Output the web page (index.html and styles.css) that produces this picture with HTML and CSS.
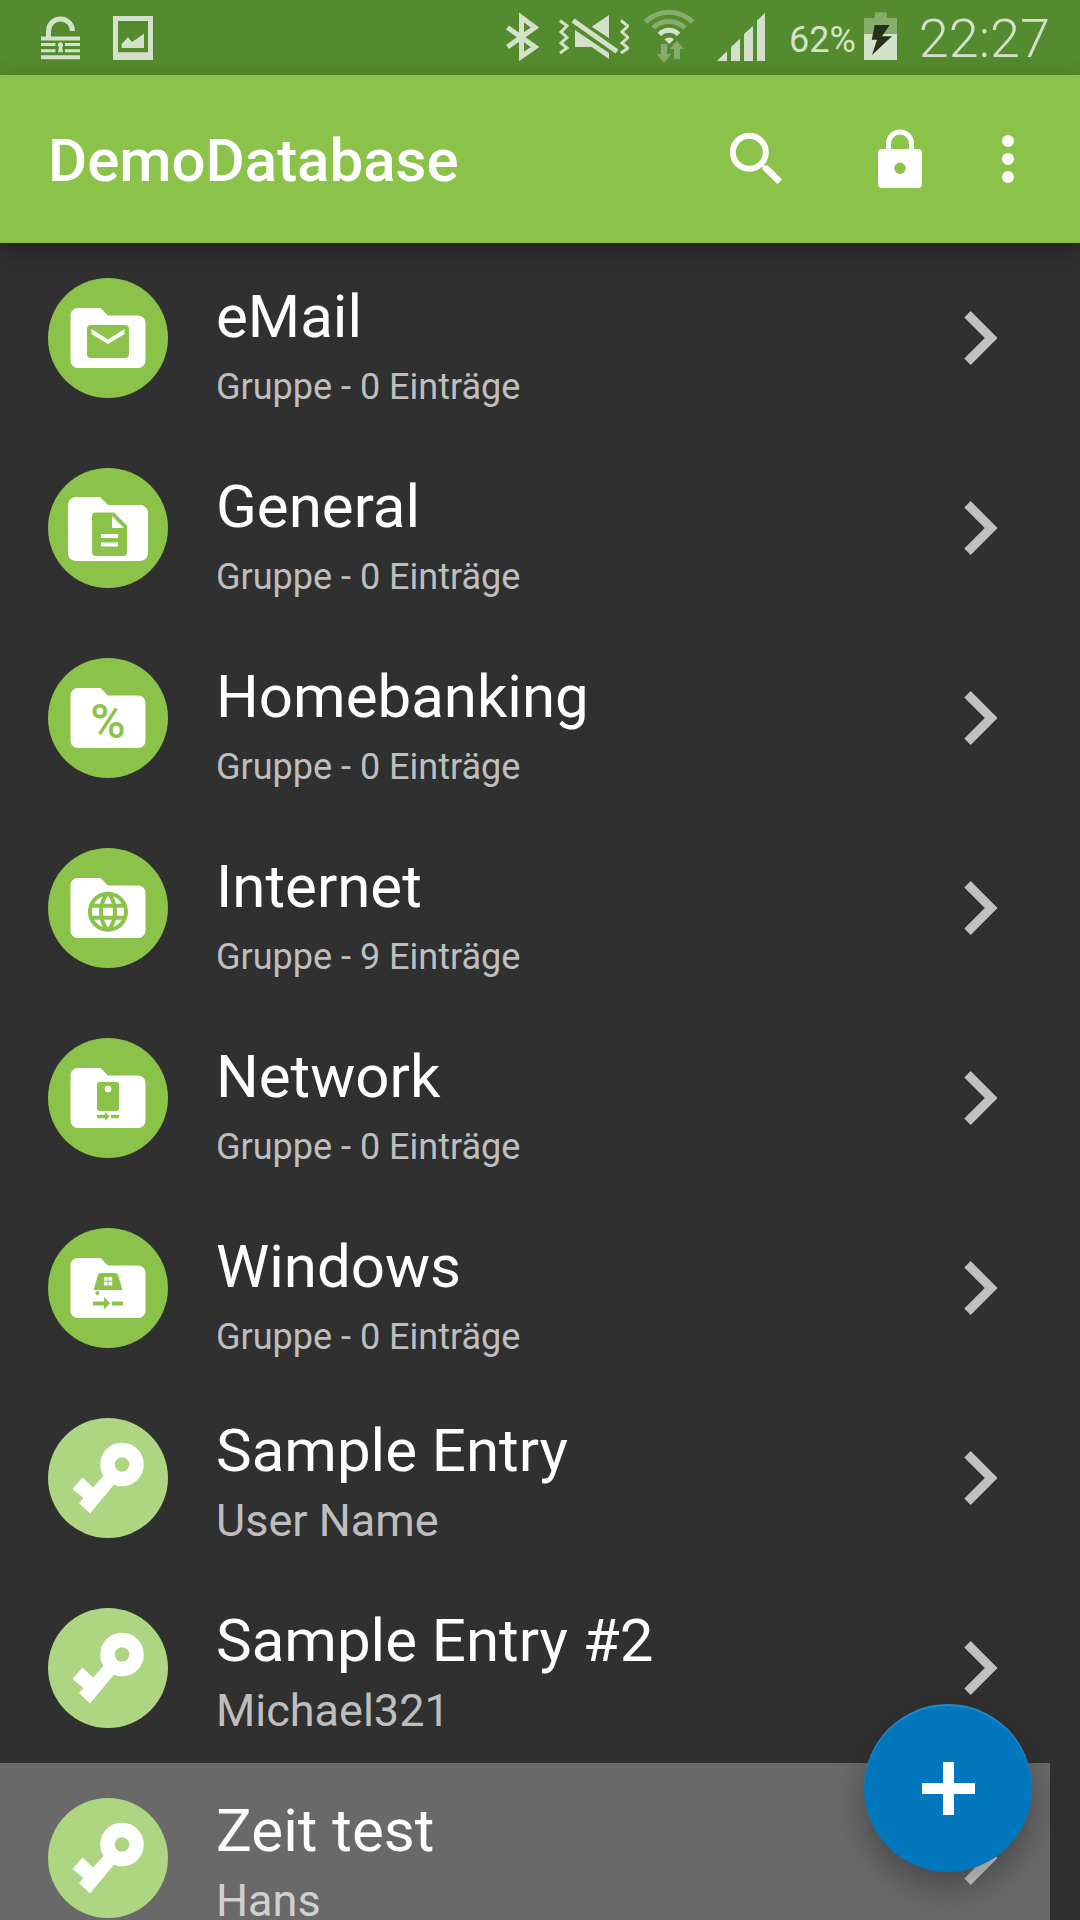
FILE: index.html
```html
<!DOCTYPE html>
<html lang="de">
<head>
<meta charset="utf-8">
<meta name="viewport" content="width=device-width">
<title>DemoDatabase</title>
<link rel="stylesheet" href="styles.css">
</head>
<body>
<svg class="defs" aria-hidden="true">
  <symbol id="folder" viewBox="0 0 120 120"><path fill="#fff" transform="translate(15 15) scale(3.75)" d="M10 4H4c-1.1 0-2 .9-2 2v12c0 1.1.9 2 2 2h16c1.1 0 2-.9 2-2V8c0-1.1-.9-2-2-2h-8z"/></symbol>
  <symbol id="key" viewBox="0 0 120 120"><circle cx="74" cy="46.500" r="14.500" fill="none" stroke="#fff" stroke-width="14.500"/><path fill="#fff" d="M56 57.500 45 69.500 34.500 59.500 24.500 71 35.500 80 31 85 42 95.500 66 66.500z"/></symbol>
  <symbol id="chevron" viewBox="0 0 72 72"><path d="M23.500 12.300 47.200 36 23.500 59.700" fill="none" stroke="currentColor" stroke-width="9"/></symbol>
</svg>

<div class="statusbar">
  <div class="notifications">
    <svg class="status-icon" width="41" height="75" viewBox="0 0 41 75"><path d="M8.500 38V31a12 12 0 0 1 24 0" fill="none" stroke="currentColor" stroke-width="5"/><path fill="currentColor" d="M1 36.500h39v4H1zM1 43h14.500v3H1zM25 43h15v3H25zM1 49.300h14.500v3H1zM25 49.300h15v3H25zM1 55.300h39v4H1zM20.500 42.300a2.700 2.700 0 0 1 1.600 4.800l1 5.200h-5.200l1-5.200a2.700 2.700 0 0 1 1.600-4.800z"/></svg>
    <svg class="status-icon" width="42" height="75" viewBox="0 0 42 75"><path fill="currentColor" fill-rule="evenodd" d="M1 16h40v44H1zM6 21v31.300h30V21zM9.700 48v-4l6.300-6.700 4 4.700 12-8.300V48z"/></svg>
  </div>
  <div class="system">
    <svg class="status-icon" width="37" height="75" viewBox="0 0 37 75"><path d="M1.500 27.500 29 47 15.500 56.500V17.500L29 27.500 1.500 47" fill="none" stroke="currentColor" stroke-width="5" stroke-miterlimit="10"/></svg>
    <svg class="status-icon" width="72" height="75" viewBox="0 0 72 75"><path d="M3 20.500 10 26 4 32 10 37.500 4 43 10 48 3 53M64 20.500 71 26 65 32 71 37.500 65 43 71 48 64 53" fill="none" stroke="currentColor" stroke-width="3"/><path d="M16 20.500 60 51.500" stroke="currentColor" stroke-width="5"/><path fill="currentColor" d="M34.700 26.700 52 15v23.300zM18 30 52 53v6L34.700 47H18z"/></svg>
    <svg class="status-icon" width="52" height="75" viewBox="0 0 52 75"><g class="dim"><path d="M2.500 22a33 33 0 0 1 47 0M10 28a23 23 0 0 1 32 0" fill="none" stroke="currentColor" stroke-width="5"/><path fill="currentColor" d="M18 44h6v10h4l-7 9-7-9h4zM33.700 40.700 41 49h-4v10h-6V49h-4.300z"/></g><path d="M16.500 34.500a13 13 0 0 1 19 0" fill="none" stroke="currentColor" stroke-width="5"/><path fill="currentColor" d="M21.500 39.500a6.500 6.500 0 0 1 9.500 0L26.300 44z"/></svg>
    <svg class="status-icon" width="66" height="75" viewBox="-8 0 66 75"><path fill="currentColor" d="M0 61h10v-9.700zM14 61h9V38.700L14 47zM27 61h9V26l-9 8zM40 61h8V13l-8 7.500z"/></svg>
    <div class="power">
      <span class="percent">62%</span>
      <svg class="status-icon" width="33" height="75" viewBox="0 0 33 75"><path class="dim" fill="currentColor" d="M10.700 12.300h12V18H33v16H0V18h10.700z"/><path fill="currentColor" d="M0 34h33v26H0z"/><path fill="#26301a" d="M10.700 25h15L18 36.300h10L8 55l5-15.300H7.700z"/></svg>
    </div>
    <time class="clock">22:27</time>
  </div>
</div>

<header class="appbar">
  <h1 class="appbar-title">DemoDatabase</h1>
  <button class="action" type="button" aria-label="Suchen"><svg width="72" height="72" viewBox="0 0 72 72"><circle cx="29.300" cy="29.300" r="16.500" fill="none" stroke="currentColor" stroke-width="6"/><path fill="currentColor" d="M42.500 42.500h5.500L62 56.500 57.500 61 42.500 46.500z"/></svg></button>
  <button class="action" type="button" aria-label="Sperren"><svg width="72" height="72" viewBox="0 0 72 72"><path fill="none" stroke="currentColor" stroke-width="5" d="M24.500 28V20.500a11.500 11.500 0 0 1 23 0V28"/><path fill="currentColor" fill-rule="evenodd" d="M18 26h36a4 4 0 0 1 4 4v31a4 4 0 0 1-4 4H18a4 4 0 0 1-4-4V30a4 4 0 0 1 4-4zm18 13.500a5.700 5.700 0 1 0 0 11.400 5.700 5.700 0 0 0 0-11.400z"/></svg></button>
  <button class="action action-more" type="button" aria-label="Weitere Optionen"><svg width="72" height="72" viewBox="0 0 24 24"><path fill="currentColor" d="M12 8a2 2 0 1 0 0-4 2 2 0 0 0 0 4zm0 2a2 2 0 1 0 0 4 2 2 0 0 0 0-4zm0 6a2 2 0 1 0 0 4 2 2 0 0 0 0-4z"/></svg></button>
</header>

<main class="content">
  <ul class="list">
    <li><a class="row" href="#email">
      <svg class="avatar" viewBox="0 0 120 120"><use href="#folder"/><rect class="mark" x="39" y="47" width="42" height="33" rx="4"/><path fill="#fff" d="M43.500 51 60 61.500 76.500 51v5L60 66 43.500 56z"/></svg>
      <span class="text"><span class="name">eMail</span><span class="detail">Gruppe - 0 Einträge</span></span>
      <svg class="chevron"><use href="#chevron"/></svg></a></li>
    <li><a class="row" href="#general">
      <svg class="avatar" viewBox="0 0 120 120"><path fill="#fff" transform="translate(12 13) scale(4)" d="M10 4H4c-1.100 0-2 .9-2 2v12c0 1.100.9 2 2 2h16c1.100 0 2-.9 2-2V8c0-1.100-.9-2-2-2h-8z"/><path class="mark" d="M48 44.500h18l13 13V84a4 4 0 0 1-4 4H48a4 4 0 0 1-4-4V48.500a4 4 0 0 1 4-4z"/><path fill="#fff" d="M64 48v12h12zM53 66h17v4H53zM53 74.500h17v4H53z"/></svg>
      <span class="text"><span class="name">General</span><span class="detail">Gruppe - 0 Einträge</span></span>
      <svg class="chevron"><use href="#chevron"/></svg></a></li>
    <li><a class="row" href="#homebanking">
      <svg class="avatar" viewBox="0 0 120 120"><use href="#folder"/><text class="mark mark-text" x="60" y="80" text-anchor="middle">%</text></svg>
      <span class="text"><span class="name">Homebanking</span><span class="detail">Gruppe - 0 Einträge</span></span>
      <svg class="chevron"><use href="#chevron"/></svg></a></li>
    <li><a class="row" href="#internet">
      <svg class="avatar" viewBox="0 0 120 120"><use href="#folder"/><path class="mark" transform="translate(36 39.700) scale(2)" d="M11.990 2C6.470 2 2 6.480 2 12s4.470 10 9.990 10C17.520 22 22 17.520 22 12S17.520 2 11.990 2zm6.930 6h-2.950a15.650 15.650 0 0 0-1.380-3.560A8.030 8.030 0 0 1 18.920 8zM12 4.040c.83 1.200 1.480 2.530 1.910 3.960h-3.820c.43-1.430 1.080-2.760 1.910-3.960zM4.260 14C4.100 13.360 4 12.690 4 12s.1-1.360.26-2h3.380c-.08.66-.14 1.320-.14 2 0 .68.06 1.340.14 2H4.260zm.82 2h2.950c.32 1.250.78 2.450 1.380 3.560A7.987 7.987 0 0 1 5.080 16zm2.950-8H5.080a7.987 7.987 0 0 1 4.330-3.560A15.650 15.650 0 0 0 8.030 8zM12 19.960c-.83-1.200-1.480-2.530-1.910-3.960h3.820c-.43 1.430-1.080 2.760-1.910 3.960zM14.340 14H9.660c-.09-.66-.16-1.320-.16-2 0-.68.07-1.350.16-2h4.680c.09.65.16 1.320.16 2 0 .68-.07 1.340-.16 2zm.25 5.560c.6-1.110 1.060-2.310 1.380-3.560h2.950a8.030 8.030 0 0 1-4.330 3.560zM16.360 14c.08-.66.14-1.320.14-2 0-.68-.06-1.340-.14-2h3.380c.16.64.26 1.310.26 2s-.1 1.360-.26 2h-3.380z"/></svg>
      <span class="text"><span class="name">Internet</span><span class="detail">Gruppe - 9 Einträge</span></span>
      <svg class="chevron"><use href="#chevron"/></svg></a></li>
    <li><a class="row" href="#network">
      <svg class="avatar" viewBox="0 0 120 120"><use href="#folder"/><rect class="mark" x="49" y="44" width="22" height="29" rx="2.500"/><circle cx="60" cy="51" r="3.300" fill="#fff"/><path class="mark" d="M49 76.700h8V74l4.500 4.500L57 83v-2.800h-8zM63 76.700h8v3.500h-8z"/></svg>
      <span class="text"><span class="name">Network</span><span class="detail">Gruppe - 0 Einträge</span></span>
      <svg class="chevron"><use href="#chevron"/></svg></a></li>
    <li><a class="row" href="#windows">
      <svg class="avatar" viewBox="0 0 120 120"><use href="#folder"/><path class="mark" d="M53 45h14q2.500 0 3.200 2.500L74.500 62h-29L49.800 47.500Q50.500 45 53 45z"/><path fill="#fff" d="M56 49h3.700v3.800H56zM60.500 49h3.700v3.800h-3.700zM56 53.700h3.700v3.800H56zM60.500 53.700h3.700v3.800h-3.700z"/><circle class="mark" cx="49.300" cy="65" r="2"/><path class="mark" d="M45 73.500h11V69l6 6.300-6 6.200v-4H45zM64 73.500h11v4H64z"/></svg>
      <span class="text"><span class="name">Windows</span><span class="detail">Gruppe - 0 Einträge</span></span>
      <svg class="chevron"><use href="#chevron"/></svg></a></li>
    <li><a class="row entry" href="#sample-entry">
      <svg class="avatar"><use href="#key"/></svg>
      <span class="text"><span class="name">Sample Entry</span><span class="detail">User Name</span></span>
      <svg class="chevron"><use href="#chevron"/></svg></a></li>
    <li><a class="row entry" href="#sample-entry-2">
      <svg class="avatar"><use href="#key"/></svg>
      <span class="text"><span class="name">Sample Entry #2</span><span class="detail">Michael321</span></span>
      <svg class="chevron"><use href="#chevron"/></svg></a></li>
    <li><a class="row entry pressed" href="#zeit-test">
      <svg class="avatar"><use href="#key"/></svg>
      <span class="text"><span class="name">Zeit test</span><span class="detail">Hans</span></span>
      <svg class="chevron"><use href="#chevron"/></svg></a></li>
  </ul>
</main>

<button class="fab" type="button" aria-label="Hinzufügen"><svg width="54" height="54" viewBox="0 0 54 54"><path fill="currentColor" d="M22 1h11v21h21v11H33v21H22V33H1V22h21z"/></svg></button>
</body>
</html>
```

FILE: styles.css
```css
* {
  box-sizing: border-box;
}

body {
  margin: 0;
  height: 100vh;
  display: flex;
  flex-direction: column;
  overflow: hidden;
  background: #303030;
  color: #fff;
  font-family: Roboto, "Noto Sans", sans-serif;
}

svg {
  display: block;
  flex: none;
}

.defs {
  position: absolute;
  width: 0;
  height: 0;
}

/* Status bar */
.statusbar {
  flex: none;
  display: flex;
  justify-content: space-between;
  height: 75px;
  padding: 0 30px 0 40px;
  background: #548b2e;
  color: #d4e1ca;
}

.notifications {
  display: flex;
  gap: 31px;
}

.system,
.power {
  display: flex;
  align-items: center;
}

.system {
  gap: 14px;
}

.power {
  gap: 8px;
}

.dim {
  color: #87ad6c;
}

.percent {
  font-size: 36px;
  line-height: 42px;
  padding-top: 4px;
}

.clock {
  font-size: 54px;
  line-height: 64px;
  font-weight: 300;
  padding-left: 8px;
  padding-top: 2px;
}

/* App bar */
.appbar {
  flex: none;
  position: relative;
  z-index: 1;
  display: flex;
  align-items: center;
  height: 168px;
  padding: 0 36px 0 48px;
  background: #8bc34a;
  box-shadow: 0 8px 24px rgba(0, 0, 0, 0.3);
}

.appbar-title {
  flex: 1;
  margin: 0;
  padding-top: 4px;
  font-size: 60px;
  line-height: 70px;
  font-weight: 500;
}

.action {
  width: 144px;
  height: 144px;
  display: flex;
  align-items: center;
  justify-content: center;
  padding: 0;
  border: 0;
  background: none;
  color: inherit;
}

.action-more {
  width: 72px;
}

/* Database list */
.content {
  flex: 1;
  min-height: 0;
  overflow: hidden;
}

.list {
  margin: 0 30px 0 0;
  padding: 0;
  list-style: none;
}

.row {
  display: flex;
  align-items: center;
  height: 190px;
  padding: 0 34px 0 48px;
  color: inherit;
  text-decoration: none;
}

.pressed {
  background: #696969;
}

.avatar {
  width: 120px;
  height: 120px;
  margin-right: 48px;
  border-radius: 50%;
  background: #8bc34a;
}

.entry .avatar {
  background: #aed581;
}

.mark {
  fill: #8bc34a;
}

.mark-text {
  font-size: 48px;
  font-weight: 500;
}

.text {
  flex: 1;
  align-self: flex-start;
  display: flex;
  flex-direction: column;
  gap: 14px;
  padding-top: 39px;
}

.entry .text {
  gap: 12px;
  padding-top: 33px;
}

.name {
  font-size: 60px;
  line-height: 70px;
}

.detail {
  font-size: 36px;
  line-height: 42px;
  color: rgba(255, 255, 255, 0.7);
}

.entry .detail {
  font-size: 45px;
  line-height: 45px;
}

.chevron {
  width: 72px;
  height: 72px;
  color: rgba(255, 255, 255, 0.7);
}

/* Floating action button */
.fab {
  position: fixed;
  right: 48px;
  bottom: 48px;
  z-index: 2;
  display: flex;
  align-items: center;
  justify-content: center;
  width: 168px;
  height: 168px;
  padding: 0;
  border: 0;
  border-radius: 50%;
  background: #0277bd;
  color: #fff;
  box-shadow: 0 16px 32px rgba(0, 0, 0, 0.3), inset 0 2px 1px rgba(255, 255, 255, 0.15);
}
```
